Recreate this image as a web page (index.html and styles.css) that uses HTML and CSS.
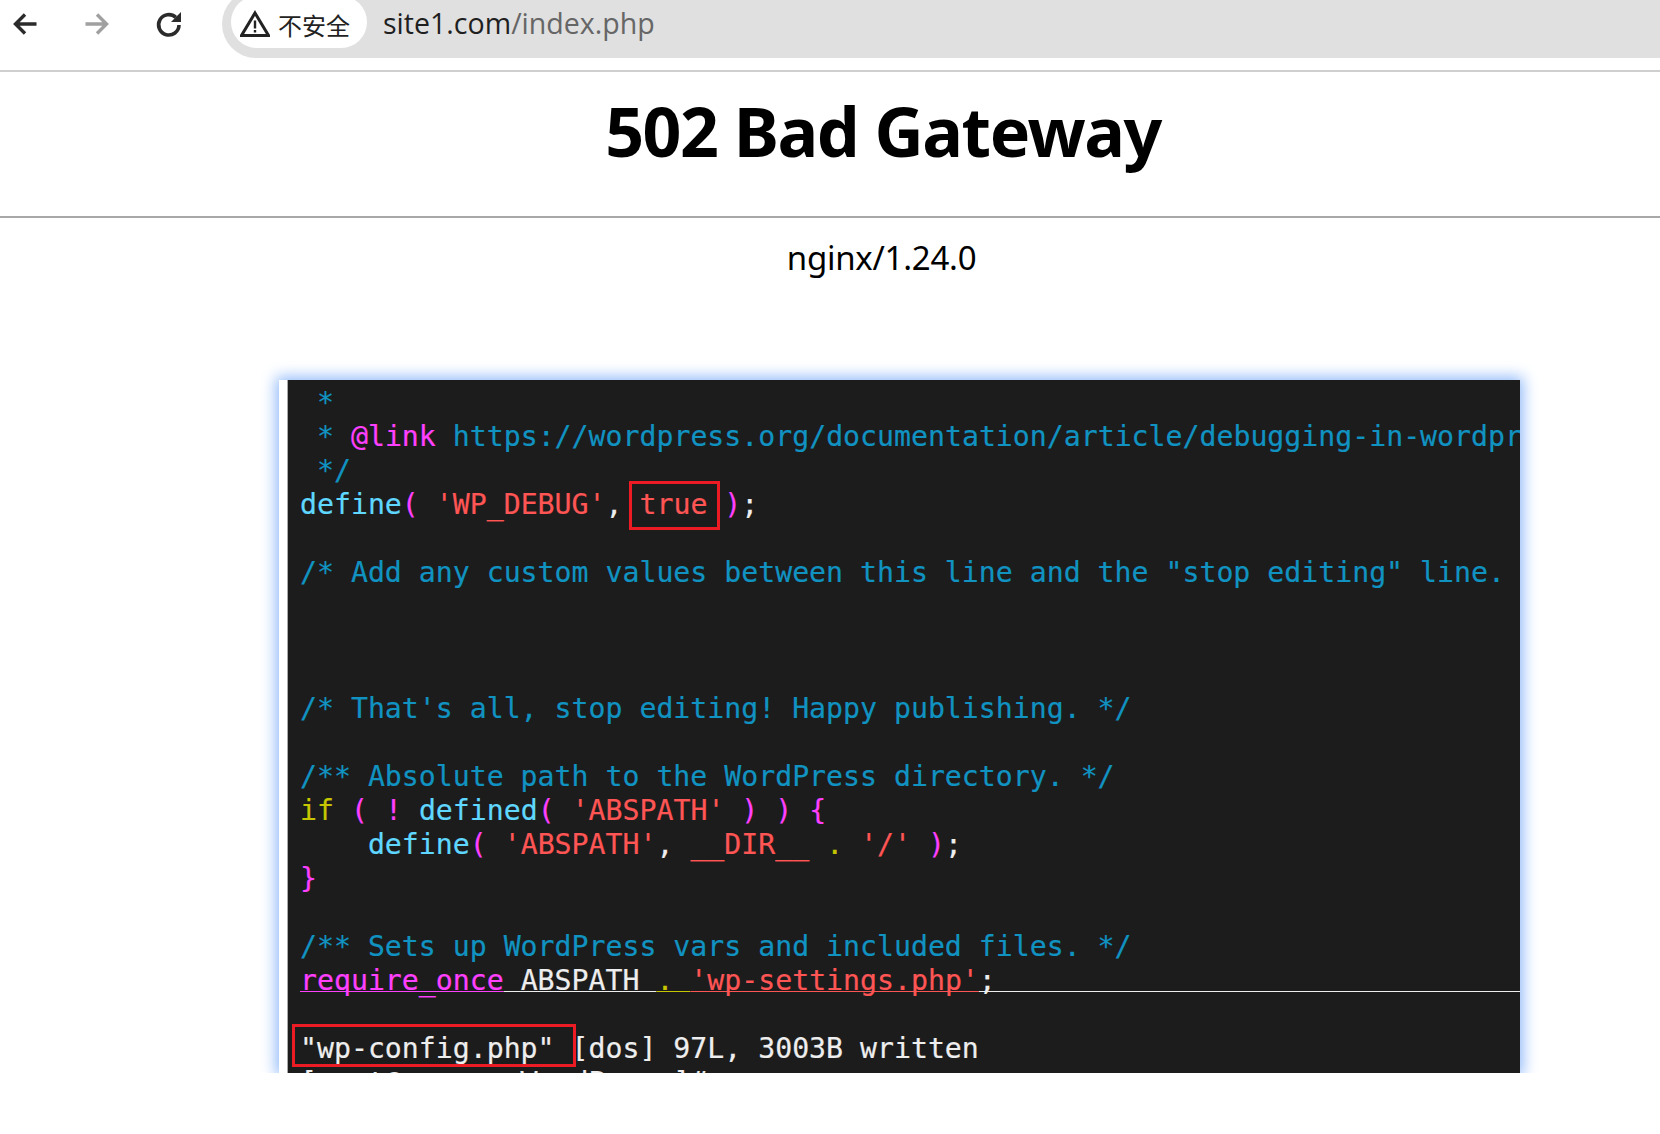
FILE: index.html
```html
<!DOCTYPE html>
<html lang="zh">
<head>
<meta charset="utf-8">
<title>502 Bad Gateway</title>
<link rel="stylesheet" href="styles.css">
</head>
<body>
<header class="toolbar">
  <svg class="nav" viewBox="0 0 28 28"><path d="M25.500 14H5M14 4.500 4.500 14l9.500 9.500" fill="none" stroke="#2b2b2b" stroke-width="3.400"/></svg>
  <svg class="nav" viewBox="0 0 28 28"><path d="M2.500 14H23M14 4.500l9.500 9.500-9.500 9.500" fill="none" stroke="#a0a0a0" stroke-width="3.400"/></svg>
  <svg class="nav" viewBox="0 0 28 28"><path d="M24 15a10.200 10.200 0 1 1-3.200-7.600" fill="none" stroke="#2b2b2b" stroke-width="3.600"/><path d="M26 2v10H16z" fill="#2b2b2b"/></svg>
  <div class="omnibox">
    <div class="pill">
      <svg class="warn" viewBox="0 0 30 28"><path d="M15 3 28.500 25.500H1.500z" fill="none" stroke="#222" stroke-width="3"/><path d="M15 10.500v8M15 20v2.500" stroke="#222" stroke-width="2.400"/></svg>
      <span class="pill-text">不安全</span>
    </div>
    <div class="url">site1.com<span class="url-path">/index.php</span></div>
  </div>
</header>
<h1 class="title">502 Bad Gateway</h1>
<hr class="rule">
<p class="server">nginx/1.24.0</p>
<figure class="shot">
  <div class="term">
    <pre class="code"> <span class="c">*</span>
 <span class="c">*</span> <span class="m">@link</span> <span class="c">https://wordpress.org/documentation/article/debugging-in-wordpr</span>
 <span class="c">*/</span>
<span class="f">define</span><span class="m">(</span> <span class="s">'WP_DEBUG'</span><span class="w">,</span> <span class="s">true</span> <span class="m">)</span><span class="w">;</span>

<span class="c">/* Add any custom values between this line and the "stop editing" line.</span>



<span class="c">/* That's all, stop editing! Happy publishing. */</span>

<span class="c">/** Absolute path to the WordPress directory. */</span>
<span class="y">if</span> <span class="m">(</span> <span class="m">!</span> <span class="f">defined</span><span class="m">(</span> <span class="s">'ABSPATH'</span> <span class="m">)</span> <span class="m">)</span> <span class="m">{</span>
    <span class="f">define</span><span class="m">(</span> <span class="s">'ABSPATH'</span><span class="w">,</span> <span class="s">__DIR__</span> <span class="y">.</span> <span class="s">'/'</span> <span class="m">)</span><span class="w">;</span>
<span class="m">}</span>

<span class="c">/** Sets up WordPress vars and included files. */</span>
<span class="u"><span class="m">require_once</span><span class="w"> ABSPATH </span><span class="y">. </span><span class="s">'wp-settings.php'</span><span class="w">;                               </span></span>

<span class="w">"wp-config.php" [dos] 97L, 3003B written
[root@server WordPress]#</span></pre>
    <div class="mark mark-true"></div>
    <div class="mark mark-file"></div>
  </div>
</figure>
</body>
</html>
```
FILE: styles.css
```css
* { box-sizing: border-box; }
html, body { margin: 0; background: #fff; }
body { font-family: "Noto Sans", "Noto Sans CJK SC", sans-serif; color: #000; overflow: hidden; }

.toolbar {
  display: flex;
  align-items: flex-start;
  height: 72px;
  padding-left: 11px;
  border-bottom: 2px solid #cfcfcf;
}
.nav { width: 28px; height: 28px; margin: 10px 44px 0 0; flex: none; }
.nav:nth-child(3) { margin-right: 39px; }
.omnibox {
  flex: 1;
  display: flex;
  align-items: flex-start;
  height: 68px;
  margin-top: -10px;
  padding-left: 9px;
  background: #e0e0e0;
  border-radius: 34px 0 0 34px;
}
.pill {
  display: flex;
  align-items: center;
  gap: 8px;
  width: 136px;
  height: 52px;
  margin-top: 6px;
  padding: 4px 0 0 9px;
  background: #fff;
  border-radius: 26px;
}
.warn { width: 30px; height: 28px; flex: none; }
.pill-text { margin-top: 1px; font: 24px "Noto Sans CJK SC", sans-serif; color: #222; }
.url { margin: 13px 0 0 16px; font: 28.550px/40px "Open Sans", sans-serif; color: #1f1f1f; }
.url-path { color: #666; }

.title {
  margin: 0;
  padding: 15px 0 0 106px;
  height: 144px;
  text-align: center;
  font-size: 68px;
  line-height: 88px;
  font-weight: 700;
  letter-spacing: -1.450px;
}
.rule { margin: 0; border: 0; border-top: 2px solid #a8a8a8; }
.server {
  margin: 0;
  padding: 20px 0 0 103px;
  height: 162px;
  text-align: center;
  font-size: 33px;
  line-height: 40px;
  letter-spacing: -0.250px;
}
.shot {
  width: 1241px;
  height: 693px;
  margin: 0 0 0 279px;
  border-left: 8px solid #fff;
  box-shadow: 0 0 14px 3px #8fb9f9;
  background: #fff;
}
.term {
  position: relative;
  height: 100%;
  overflow: hidden;
  padding: 6px 0 0 12px;
  background: #1c1c1c;
  border-left: 1px solid #a9a9a9;
}
.code {
  margin: 0;
  font: 28.200px/34px "DejaVu Sans Mono", monospace;
  white-space: pre;
  -webkit-text-stroke: 0.2px;
}
.c { color: #1193c2; }
.m { color: #ff40ff; }
.f { color: #5fd7ff; }
.s { color: #ff5555; }
.w { color: #eeeeee; }
.y { color: #c6c600; }
.u span {
  text-decoration: underline 1px;
  text-underline-offset: 1px;
  text-decoration-skip-ink: none;
}
.mark { position: absolute; border: 3px solid #ed1c24; }
.mark-true { left: 341px; top: 101px; width: 91px; height: 49px; }
.mark-file { left: 4px; top: 644px; width: 284px; height: 43px; }
```
